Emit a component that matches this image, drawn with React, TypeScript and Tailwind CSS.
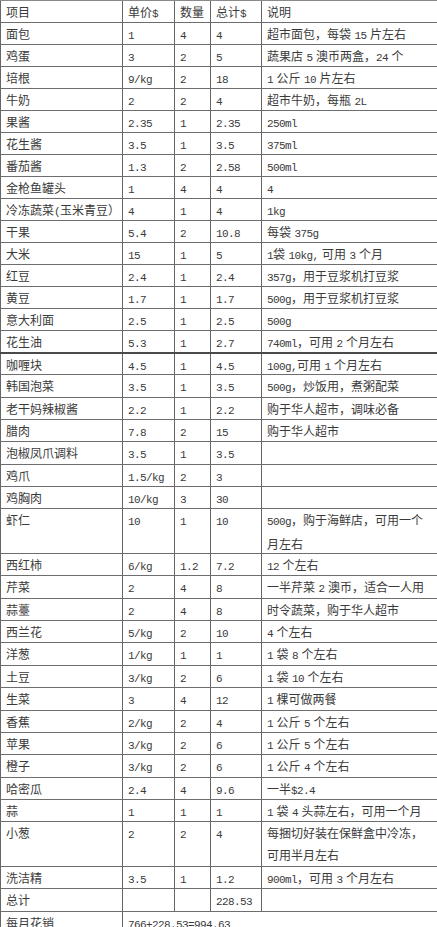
import React from "react";

type Row = { c: string[]; lines?: string[]; tall?: boolean };

const top: Row[] = [
  { c: ["项目", "单价$", "数量", "总计$", "说明"] },
  { c: ["面包", "1", "4", "4", "超市面包，每袋 15 片左右"] },
  { c: ["鸡蛋", "3", "2", "5", "蔬果店 5 澳币两盒，24 个"] },
  { c: ["培根", "9/kg", "2", "18", "1 公斤 10 片左右"] },
  { c: ["牛奶", "2", "2", "4", "超市牛奶，每瓶 2L"] },
  { c: ["果酱", "2.35", "1", "2.35", "250ml"] },
  { c: ["花生酱", "3.5", "1", "3.5", "375ml"] },
  { c: ["番茄酱", "1.3", "2", "2.58", "500ml"] },
  { c: ["金枪鱼罐头", "1", "4", "4", "4"] },
  { c: ["冷冻蔬菜(玉米青豆）", "4", "1", "4", "1kg"] },
  { c: ["干果", "5.4", "2", "10.8", "每袋 375g"] },
  { c: ["大米", "15", "1", "5", "1袋 10kg, 可用 3 个月"] },
  { c: ["红豆", "2.4", "1", "2.4", "357g，用于豆浆机打豆浆"] },
  { c: ["黄豆", "1.7", "1", "1.7", "500g，用于豆浆机打豆浆"] },
  { c: ["意大利面", "2.5", "1", "2.5", "500g"] },
  { c: ["花生油", "5.3", "1", "2.7", "740ml，可用 2 个月左右"] },
];

const bottom: Row[] = [
  { c: ["咖喱块", "4.5", "1", "4.5", "100g,可用 1 个月左右"] },
  { c: ["韩国泡菜", "3.5", "1", "3.5", "500g，炒饭用，煮粥配菜"] },
  { c: ["老干妈辣椒酱", "2.2", "1", "2.2", "购于华人超市，调味必备"] },
  { c: ["腊肉", "7.8", "2", "15", "购于华人超市"] },
  { c: ["泡椒凤爪调料", "3.5", "1", "3.5", ""] },
  { c: ["鸡爪", "1.5/kg", "2", "3", ""] },
  { c: ["鸡胸肉", "10/kg", "3", "30", ""] },
  { c: ["虾仁", "10", "1", "10", ""], lines: ["500g，购于海鲜店，可用一个", "月左右"], tall: true },
  { c: ["西红柿", "6/kg", "1.2", "7.2", "12 个左右"] },
  { c: ["芹菜", "2", "4", "8", "一半芹菜 2 澳币，适合一人用"] },
  { c: ["蒜薹", "2", "4", "8", "时令蔬菜，购于华人超市"] },
  { c: ["西兰花", "5/kg", "2", "10", "4 个左右"] },
  { c: ["洋葱", "1/kg", "1", "1", "1 袋 8 个左右"] },
  { c: ["土豆", "3/kg", "2", "6", "1 袋 10 个左右"] },
  { c: ["生菜", "3", "4", "12", "1 棵可做两餐"] },
  { c: ["香蕉", "2/kg", "2", "4", "1 公斤 5 个左右"] },
  { c: ["苹果", "3/kg", "2", "6", "1 公斤 5 个左右"] },
  { c: ["橙子", "3/kg", "2", "6", "1 公斤 4 个左右"] },
  { c: ["哈密瓜", "2.4", "4", "9.6", "一半$2.4"] },
  { c: ["蒜", "1", "1", "1", "1 袋 4 头蒜左右，可用一个月"] },
  { c: ["小葱", "2", "2", "4", ""], lines: ["每捆切好装在保鲜盒中冷冻，", "可用半月左右"], tall: true },
  { c: ["洗洁精", "3.5", "1", "1.2", "900ml，可用 3 个月左右"] },
  { c: ["总计", "", "", "228.53", ""] },
];

function Txt({ s }: { s: string }) {
  const parts = s.split(/([\x00-\x7F]+)/).filter((p) => p.length > 0);
  return (
    <>
      {parts.map((p, i) => {
        if (!/^[\x00-\x7F]+$/.test(p)) return <span key={i}>{p}</span>;
        const bits = p.split(/( )/).filter((b) => b.length > 0);
        return (
          <React.Fragment key={i}>
            {bits.map((b, j) =>
              b === " " ? (
                <span key={j} className="inline-block w-[3.5px]" />
              ) : (
                <span
                  key={j}
                  className="font-['Liberation_Mono',monospace] text-[11px] tracking-[-0.6px]"
                >
                  {b}
                </span>
              )
            )}
          </React.Fragment>
        );
      })}
    </>
  );
}

const widths = ["w-[122px]", "w-[52px]", "w-[36px]", "w-[51px]", "flex-1"];

function TableRow({ r, lower, first, thick }: { r: Row; lower: boolean; first: boolean; thick?: boolean }) {
  const h = r.tall ? (lower ? "h-[44.7px]" : "h-[44px]") : lower ? "h-[22.35px]" : "h-[22px]";
  const bt = first ? "border-t border-[#8a8a8a]" : thick ? "border-t-2 border-[#4a4a4a]" : "border-t border-[#6e6e6e]";
  return (
    <div className={`flex ${h} ${bt} shrink-0`}>
      {r.c.map((cell, i) => (
        <div
          key={i}
          className={`${widths[i]} shrink-0 border-l border-[#666] pl-[5px] leading-[22px] overflow-hidden whitespace-nowrap`}
        >
          {i === 4 && r.lines ? (
            r.lines.map((l, j) => (
              <div key={j} className="leading-[22px]">
                <Txt s={l} />
              </div>
            ))
          ) : (
            <Txt s={cell} />
          )}
        </div>
      ))}
    </div>
  );
}

export default function App() {
  return (
    <div className="w-[437px] h-[927px] overflow-hidden bg-white text-[#3a3a3a] text-[12px] font-['Noto_Sans_CJK_SC',sans-serif] font-normal">
      <div className="flex flex-col">
        {top.map((r, i) => (
          <TableRow key={"t" + i} r={r} lower={false} first={i === 0} />
        ))}
        {bottom.map((r, i) => (
          <TableRow key={"b" + i} r={r} lower={true} first={false} thick={i === 0} />
        ))}
        <div className="flex h-[22px] border-t border-[#6e6e6e] shrink-0">
          <div className="w-[122px] shrink-0 border-l border-[#666] pl-[5px] leading-[22px]">
            <Txt s="每月花销" />
          </div>
          <div className="flex-1 border-l border-[#666] pl-[5px] leading-[22px]">
            <Txt s="766+228.53=994.63" />
          </div>
        </div>
      </div>
    </div>
  );
}
